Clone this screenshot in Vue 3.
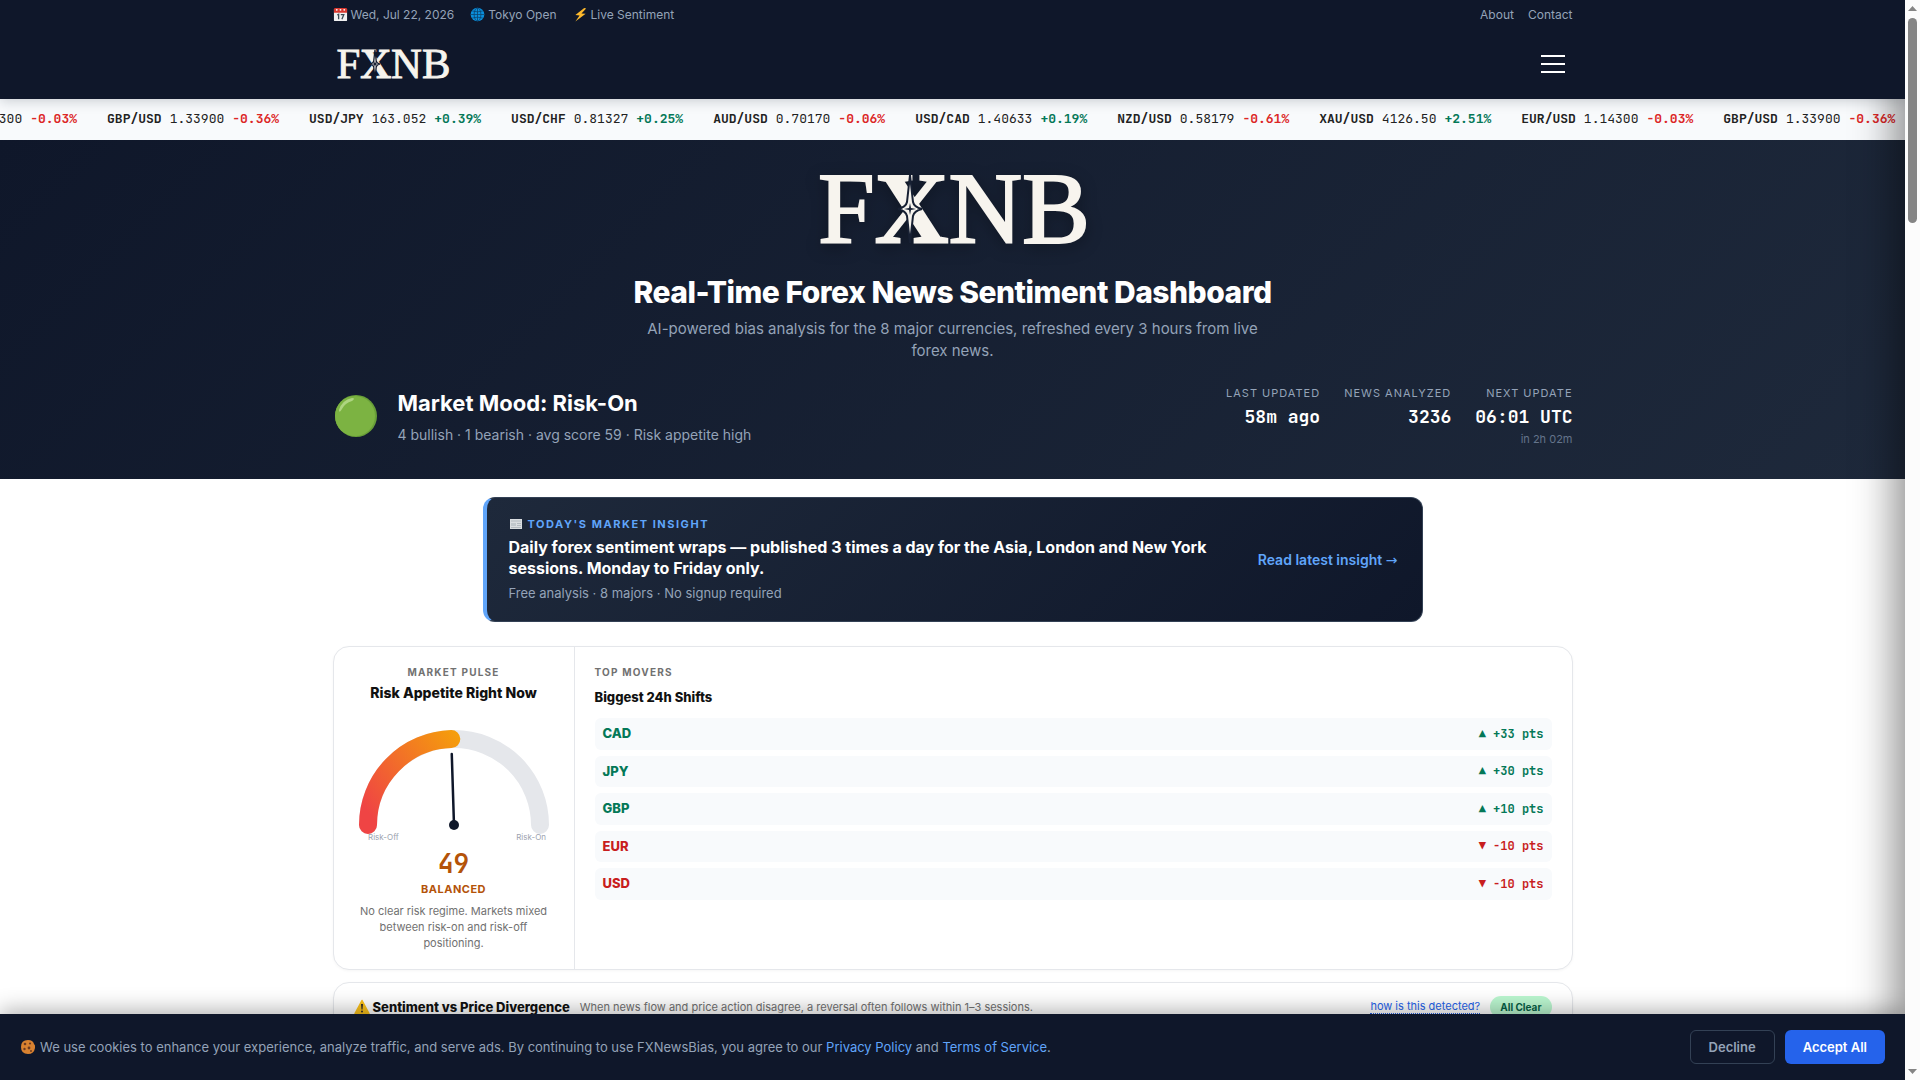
<script setup>
const ticks = [
  { pair: 'EUR/USD', price: '1.14300', change: '-0.03%' },
  { pair: 'GBP/USD', price: '1.33900', change: '-0.36%' },
  { pair: 'USD/JPY', price: '163.052', change: '+0.39%' },
  { pair: 'USD/CHF', price: '0.81327', change: '+0.25%' },
  { pair: 'AUD/USD', price: '0.70170', change: '-0.06%' },
  { pair: 'USD/CAD', price: '1.40633', change: '+0.19%' },
  { pair: 'NZD/USD', price: '0.58179', change: '-0.61%' },
  { pair: 'XAU/USD', price: '4126.50', change: '+2.51%' },
]
const tape = [...ticks, ...ticks.slice(0, 2)]
const stats = [
  { label: 'Last Updated', value: '58m ago' },
  { label: 'News Analyzed', value: '3236' },
  { label: 'Next Update', value: '06:01 UTC', note: 'in 2h 02m' },
]
const movers = [
  { code: 'CAD', pts: 33 },
  { code: 'JPY', pts: 30 },
  { code: 'GBP', pts: 10 },
  { code: 'EUR', pts: -10 },
  { code: 'USD', pts: -10 },
]
const score = 49
const angle = Math.PI * (1 - score / 100)
const at = (r) => `${100 + r * Math.cos(angle)} ${105 - r * Math.sin(angle)}`
</script>

<template>
  <div class="window">
    <div class="page">
      <header class="site-header">
        <div class="container topbar">
          <div class="topbar-left">
            <span class="meta">
              <svg class="emoji" viewBox="0 0 16 16" aria-hidden="true">
                <rect x="1" y="2" width="14" height="13" rx="1" fill="#f1f1f1" />
                <path d="M1 6V2.500Q1 1 2.500 1H13.500Q15 1 15 2.500V6Z" fill="#d8382f" />
                <circle cx="4" cy="3" r="1" fill="#fff" /><circle cx="8" cy="3" r="1" fill="#fff" /><circle cx="12" cy="3" r="1" fill="#fff" />
                <path d="M4.500 8.500L6 7.700V13M8.300 8.200H11.500L9.500 13" fill="none" stroke="#3c4b53" stroke-width="1.400" />
              </svg>Wed, Jul 22, 2026
            </span>
            <span class="meta">
              <svg class="emoji" viewBox="0 0 16 16" aria-hidden="true">
                <circle cx="8" cy="8" r="7.300" fill="#0a8fdc" />
                <g fill="none" stroke="#0b426c" stroke-width="0.800">
                  <ellipse cx="8" cy="8" rx="3.600" ry="7" /><path d="M8 1V15M1 8H15M2.500 4.300Q8 6 13.500 4.300M2.500 11.700Q8 10 13.500 11.700" />
                </g>
              </svg>Tokyo Open
            </span>
            <span class="meta">
              <svg class="emoji" viewBox="0 0 16 16" aria-hidden="true">
                <path d="M12 1L2.500 8.500L7 9L2.500 15.500L13.500 7.300L9 6.800L14 1.500Z" fill="#fdb92c" />
              </svg>Live Sentiment
            </span>
          </div>
          <nav class="topbar-links"><a href="#about">About</a><a href="#contact">Contact</a></nav>
        </div>
        <div class="container brandbar">
          <a href="#home" class="brand" aria-label="Home">
            <svg class="logo-small" viewBox="0 0 272 76">
              <text x="1" y="72" class="logo-text">F<tspan class="logo-x">X</tspan>NB</text>
              <path d="M93 4L96 31Q97 36 105 38Q97 40 96 45L93 72L90 45Q89 40 81 38Q89 36 90 31Z" fill="#f7f4ee" stroke="#0f172a" stroke-width="3" />
              <path d="M93 31L95 36L100 38L95 40L93 45L91 40L86 38L91 36Z" fill="#0f172a" />
            </svg>
          </a>
          <button class="menu" type="button" aria-label="Open menu"><i></i><i></i><i></i></button>
        </div>
      </header>

      <div class="ticker">
        <div class="tape">
          <span v-for="(t, i) in tape" :key="i" class="tick">
            <b>{{ t.pair }}</b><span>{{ t.price }}</span><b :class="t.change[0] === '+' ? 'up' : 'down'">{{ t.change }}</b>
          </span>
        </div>
      </div>

      <section class="hero">
        <div class="container">
          <svg class="logo-large" viewBox="0 0 272 76" role="img" aria-label="FXNB logo">
            <text x="1" y="72" class="logo-text">F<tspan class="logo-x">X</tspan>NB</text>
            <path d="M93 4L96 31Q97 36 105 38Q97 40 96 45L93 72L90 45Q89 40 81 38Q89 36 90 31Z" fill="#f7f4ee" stroke="#172033" stroke-width="2" />
            <path d="M93 32L94 37L99 38L94 39L93 44L92 39L87 38L92 37Z" fill="#172033" />
          </svg>
          <h1>Real-Time Forex News Sentiment Dashboard</h1>
          <p class="tagline">AI-powered bias analysis for the 8 major currencies, refreshed every 3 hours from live forex news.</p>
          <div class="mood">
            <svg class="mood-dot" viewBox="0 0 45 45" aria-hidden="true">
              <circle cx="23" cy="22" r="21" fill="#689f38" />
              <circle cx="22" cy="22" r="20" fill="#7cb342" />
              <path d="M6 16Q9 6 19 4Q23 4 19 7Q12 9 9 15Q6 20 6 16Z" fill="#aed581" />
            </svg>
            <div class="mood-text">
              <h2>Market Mood: Risk-On</h2>
              <p>4 bullish · 1 bearish · avg score 59 · Risk appetite high</p>
            </div>
            <dl class="stats">
              <div v-for="s in stats" :key="s.label">
                <dt>{{ s.label }}</dt>
                <dd class="value">{{ s.value }}</dd>
                <dd v-if="s.note" class="note">{{ s.note }}</dd>
              </div>
            </dl>
          </div>
        </div>
      </section>

      <main class="container">
        <section class="insight">
          <div>
            <p class="insight-label">
              <svg viewBox="0 0 14 12" aria-hidden="true">
                <rect x="1" y="1" width="12" height="10" fill="#d9dde0" />
                <path d="M2 3H12M2 9.500H12M8 5.500H12M8 7.500H12" stroke="#b3bac0" /><rect x="2" y="5" width="5" height="3" fill="#c0c7cc" />
              </svg>Today's Market Insight
            </p>
            <h3>Daily forex sentiment wraps — published 3 times a day for the Asia, London and New York sessions. Monday to Friday only.</h3>
            <p class="insight-sub">Free analysis · 8 majors · No signup required</p>
          </div>
          <a href="#insight">Read latest insight <span class="arrow">→</span></a>
        </section>

        <section class="card overview">
          <div class="pulse">
            <p class="eyebrow">Market Pulse</p>
            <h3>Risk Appetite Right Now</h3>
            <svg class="gauge" viewBox="0 0 200 120">
              <defs>
                <linearGradient id="risk" gradientUnits="userSpaceOnUse" x1="5" y1="80" x2="100" y2="10">
                  <stop offset="0" stop-color="#ef4444" /><stop offset="1" stop-color="#f59e0b" />
                </linearGradient>
              </defs>
              <g fill="none" stroke-width="18" stroke-linecap="round">
                <path d="M14 105A86 86 0 0 1 186 105" stroke="#e5e7eb" />
                <path :d="`M14 105A86 86 0 0 1 ${at(86)}`" stroke="url(#risk)" />
              </g>
              <path :d="`M100 105L${at(71)}`" stroke="#0f172a" stroke-width="2.500" stroke-linecap="round" />
              <circle cx="100" cy="105" r="5" fill="#0f172a" />
              <text x="14" y="120">Risk-Off</text>
              <text x="192" y="120" text-anchor="end">Risk-On</text>
            </svg>
            <p class="score">{{ score }}</p>
            <p class="verdict">Balanced</p>
            <p class="explain">No clear risk regime. Markets mixed between risk-on and risk-off positioning.</p>
          </div>
          <div class="movers">
            <p class="eyebrow">Top Movers</p>
            <h3>Biggest 24h Shifts</h3>
            <ul>
              <li v-for="m in movers" :key="m.code" :class="m.pts > 0 ? 'up' : 'down'">
                <strong>{{ m.code }}</strong>
                <span>{{ m.pts > 0 ? '▲ +' : '▼ ' }}{{ m.pts }} pts</span>
              </li>
            </ul>
          </div>
        </section>

        <section class="card divergence">
          <svg class="warn" viewBox="0 0 16 16" aria-hidden="true">
            <path d="M8 1.500L15 14.500H1Z" fill="#fcc21b" stroke="#fcc21b" stroke-width="1.500" stroke-linejoin="round" />
            <path d="M7 5H9L8.500 10.500H7.500Z" fill="#33302a" /><circle cx="8" cy="12.500" r="1" fill="#33302a" />
          </svg>
          <h3>Sentiment vs Price Divergence</h3>
          <p>When news flow and price action disagree, a reversal often follows within 1–3 sessions.</p>
          <a href="#method">how is this detected?</a>
          <span class="badge">All Clear</span>
        </section>
      </main>

      <div class="drawer-shade"></div>

      <div class="cookies">
        <p>
          <svg class="emoji" viewBox="0 0 16 16" aria-hidden="true">
            <path d="M8 1Q13 1 14 5Q15.500 6 15 9Q14 15 8 15Q1 15 1 8Q1 1 8 1Z" fill="#d98230" />
            <g fill="#6d3b20"><circle cx="5" cy="5" r="1.300" /><circle cx="10" cy="4.500" r="1.100" /><circle cx="4.500" cy="10" r="1.200" /><circle cx="9" cy="9" r="1.400" /><circle cx="11" cy="12" r="1" /></g>
          </svg>We use cookies to enhance your experience, analyze traffic, and serve ads. By continuing to use FXNewsBias, you agree to our <a href="#privacy">Privacy Policy</a> and <a href="#terms">Terms of Service</a>.
        </p>
        <button type="button" class="decline">Decline</button>
        <button type="button" class="accept">Accept All</button>
      </div>
    </div>

    <div class="scrollbar" aria-hidden="true">
      <svg viewBox="0 0 15 18"><path d="M3 11L7.500 6L12 11Z" fill="#858585" /></svg>
      <div class="track"><div class="thumb"></div></div>
      <svg viewBox="0 0 15 18"><path d="M3 7L7.500 12L12 7Z" fill="#858585" /></svg>
    </div>
  </div>
</template>

<style>
body { margin: 0; background: #fff; }
</style>

<style scoped>
* { box-sizing: border-box; }
h1, h2, h3, p, dl, dd, ul { margin: 0; padding: 0; }
a { text-decoration: none; }
button { font: inherit; cursor: pointer; }
.window { display: flex; height: 100vh; overflow: hidden; font-family: Inter, "Liberation Sans", sans-serif; color: #111; }
.page { position: relative; flex: 1; min-width: 0; height: 100%; overflow: hidden; }
.container { max-width: 1280px; margin: 0 auto; padding: 0 20px; }
.emoji { width: 15px; height: 15px; margin-right: 3px; vertical-align: -3px; }

.site-header { position: relative; z-index: 1; background: #0f172a; box-shadow: 0 2px 12px rgba(15, 23, 42, 0.2); }
.topbar { display: flex; justify-content: space-between; height: 30px; font-size: 12px; line-height: 30px; color: #94a3b8; }
.topbar-left { display: flex; gap: 16px; }
.topbar-links { display: flex; gap: 14px; }
.topbar-links a { color: #94a3b8; }
.brandbar { display: flex; align-items: center; justify-content: space-between; height: 69px; padding-bottom: 2px; }
.brand { display: flex; padding-left: 3px; }
.logo-small { width: 114px; height: 32px; overflow: visible; }
.logo-text { font: 102px "Liberation Serif", serif; fill: #f7f4ee; stroke: #f7f4ee; stroke-width: 2; }
.logo-x { font-weight: 700; }
.menu { display: flex; flex-direction: column; gap: 6px; padding: 8px; border: 0; background: none; }
.menu i { width: 24px; height: 2px; background: #fff; }

.ticker { height: 41px; overflow: hidden; background: #f8fafc; font-family: "JetBrains Mono", "DejaVu Sans Mono", monospace; font-size: 13px; line-height: 40px; color: #222; white-space: nowrap; }
.tape { display: flex; gap: 30px; width: max-content; margin-left: -95px; }
.tick { display: flex; gap: 8px; }
.tick b { font-weight: 600; }
.up, .tick .up { color: #047857; }
.down, .tick .down { color: #dc2626; }

.hero { padding: 31px 0 33px; background: linear-gradient(135deg, #0f172a, #1e293b); color: #fff; }
.logo-large { display: block; width: 272px; height: 76px; margin: 0 auto; overflow: visible; filter: drop-shadow(0 4px 8px rgba(0, 0, 0, 0.3)); }
h1 { margin-top: 27px; font-size: 30px; line-height: 36px; font-weight: 800; letter-spacing: -0.5px; text-align: center; }
.tagline { max-width: 640px; margin: 8px auto 0; font-size: 15px; line-height: 22px; color: #94a3b8; text-align: center; }
.mood { display: flex; align-items: center; gap: 20px; margin-top: 24px; }
.mood-dot { width: 45px; height: 45px; }
.mood-text { flex: 1; }
h2 { font-size: 22px; line-height: 30px; font-weight: 700; }
.mood-text p { margin-top: 7px; font-size: 14px; line-height: 20px; color: #94a3b8; }
.stats { display: flex; gap: 24px; text-align: right; }
dt { font-size: 11px; line-height: 14px; letter-spacing: 1px; text-transform: uppercase; color: #94a3b8; }
.value { margin-top: 5px; font-family: "JetBrains Mono", "DejaVu Sans Mono", monospace; font-size: 18px; line-height: 24px; font-weight: 600; }
.note { margin-top: 3px; font-size: 11px; line-height: 14px; color: #64748b; }

.insight { display: flex; align-items: center; justify-content: space-between; gap: 24px; max-width: 940px; margin: 18px auto 0; padding: 18px 24px 19px 22px; border: 1px solid #334155; border-left: 4px solid #60a5fa; border-radius: 12px; background: linear-gradient(135deg, #1e293b, #0f172a); }
.insight-label { font-size: 11px; line-height: 16px; font-weight: 700; letter-spacing: 0.14em; text-transform: uppercase; color: #60a5fa; }
.insight-label svg { width: 14px; height: 12px; margin-right: 5px; vertical-align: -2px; }
.insight h3 { margin-top: 5px; font-size: 16px; line-height: 21px; font-weight: 700; color: #fff; }
.insight-sub { margin-top: 5px; font-size: 13px; line-height: 18px; color: #94a3b8; }
.insight a { font-size: 14px; line-height: 21px; font-weight: 600; color: #60a5fa; white-space: nowrap; }
.arrow { font-family: "DejaVu Sans", sans-serif; font-weight: 400; line-height: 1; }

.card { border: 1px solid #e5e7eb; border-radius: 16px; background: #fff; box-shadow: 0 1px 3px rgba(0, 0, 0, 0.04); }
.overview { display: flex; margin-top: 24px; }
.pulse { width: 241px; padding: 18px 20px; border-right: 1px solid #e5e7eb; text-align: center; }
.eyebrow { font-size: 10px; line-height: 14px; font-weight: 700; letter-spacing: 0.12em; text-transform: uppercase; color: #717171; }
.pulse h3 { margin-top: 4px; font-size: 14px; line-height: 20px; font-weight: 800; }
.gauge { display: block; width: 200px; height: 120px; margin-top: 17px; overflow: visible; }
.gauge text { font-size: 8px; fill: #9ca3af; }
.score { margin-top: 9px; font-family: "JetBrains Mono", "DejaVu Sans Mono", monospace; font-size: 26px; line-height: 30px; font-weight: 600; color: #b45309; }
.verdict { margin-top: 2px; font-size: 11px; line-height: 16px; font-weight: 700; letter-spacing: 0.5px; text-transform: uppercase; color: #b45309; }
.explain { margin-top: 6px; font-size: 11px; line-height: 16px; color: #717171; }
.movers { flex: 1; padding: 18px 20px; }
.movers h3 { margin-top: 9px; font-size: 13px; line-height: 18px; font-weight: 800; }
.movers ul { display: flex; flex-direction: column; gap: 6px; margin-top: 12px; list-style: none; }
.movers li { display: flex; align-items: center; justify-content: space-between; padding: 6px 8px; border-radius: 6px; background: #f8fafc; font-size: 13px; line-height: 1.5; }
.movers li.down { color: #c81e1e; }
.movers strong { font-weight: 800; }
.movers span { font-family: "JetBrains Mono", "DejaVu Sans Mono", monospace; font-size: 12px; line-height: 18px; font-weight: 600; }

.divergence { display: flex; align-items: center; margin-top: 12px; padding: 13px 20px 60px; }
.warn { width: 16px; height: 16px; margin-right: 3px; }
.divergence h3 { font-size: 13px; line-height: 20px; font-weight: 800; }
.divergence p { flex: 1; margin-left: 10px; font-size: 11px; color: #717171; }
.divergence a { margin-right: 10px; border-bottom: 1px dotted #2563eb; font-size: 11px; line-height: 13px; color: #2563eb; }
.badge { padding: 4px 10px; border-radius: 12px; background: #bbf7d0; font-size: 10px; line-height: 14px; font-weight: 700; color: #065f46; }

.drawer-shade { position: absolute; top: 0; bottom: 0; left: 100%; width: 300px; box-shadow: -10px 0 40px rgba(0, 0, 0, 0.45); }
.cookies { position: absolute; left: 0; right: 0; bottom: 0; display: flex; align-items: center; gap: 10px; height: 66px; padding: 0 20px; background: #0f172a; box-shadow: 0 -4px 20px rgba(0, 0, 0, 0.3); font-size: 13px; color: #94a3b8; }
.cookies p { flex: 1; line-height: 20px; }
.cookies .emoji { width: 16px; height: 16px; margin-right: 4px; }
.cookies a { color: #60a5fa; }
.cookies button { height: 34px; padding: 0 18px; border: 1px solid #334155; border-radius: 6px; background: none; font-weight: 600; color: #94a3b8; }
.cookies .accept { border: 0; background: #2563eb; color: #fff; }

.scrollbar { display: flex; flex-direction: column; width: 15px; background: #fcfcfc; }
.scrollbar svg { width: 15px; height: 18px; }
.track { flex: 1; padding: 0 3px; }
.thumb { height: 205px; border-radius: 5px; background: #858585; }
</style>
